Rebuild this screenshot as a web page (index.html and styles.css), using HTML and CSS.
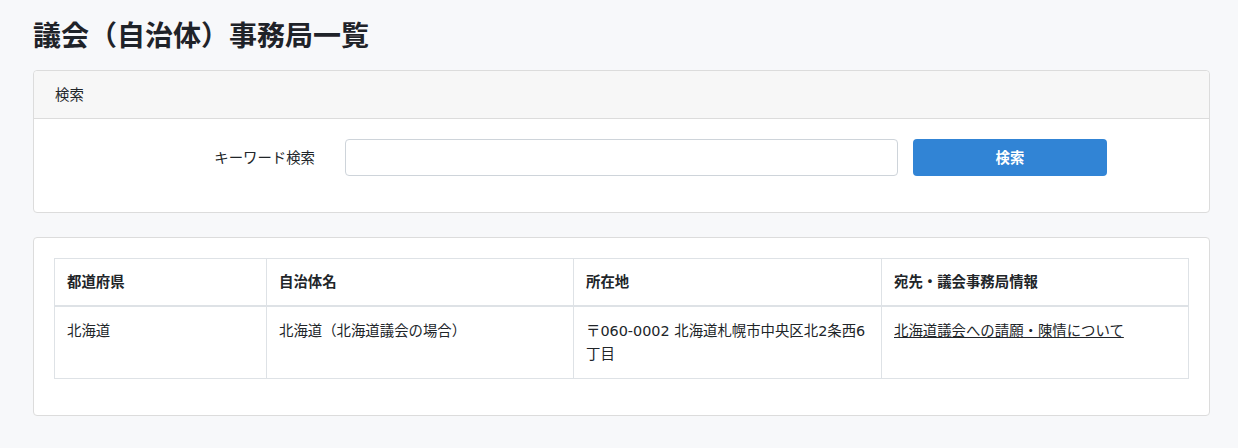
FILE: index.html
```html
<!DOCTYPE html>
<html lang="ja">
<head>
  <meta charset="UTF-8" />
  <meta name="viewport" content="width=device-width, initial-scale=1.0" />
  <title>議会（自治体）事務局一覧</title>
  <link rel="stylesheet" href="styles.css">
</head>
<body>
  <main class="page">
    <h1 class="page-title">議会（自治体）事務局一覧</h1>

    <section class="card">
      <div class="card-header">検索</div>
      <div class="card-body">
        <form class="search-row">
          <label class="search-label" for="keyword">キーワード検索</label>
          <input class="search-input" id="keyword" type="text">
          <button class="search-button" type="button">検索</button>
        </form>
      </div>
    </section>

    <section class="card">
      <div class="card-body">
        <table class="office-table">
          <thead>
            <tr>
              <th class="col-pref">都道府県</th>
              <th class="col-name">自治体名</th>
              <th class="col-addr">所在地</th>
              <th class="col-info">宛先・議会事務局情報</th>
            </tr>
          </thead>
          <tbody>
            <tr>
              <td>北海道</td>
              <td>北海道（北海道議会の場合）</td>
              <td>〒060-0002 北海道札幌市中央区北2条西6丁目</td>
              <td><a href="#">北海道議会への請願・陳情について</a></td>
            </tr>
          </tbody>
        </table>
      </div>
    </section>
  </main>
</body>
</html>
```

FILE: styles.css
```css
body {
  margin: 0;
  font-family: "DejaVu Sans", "Noto Sans CJK JP", sans-serif;
  font-size: 14.4px;
  line-height: 22px;
  background-color: #f7f8fa;
  color: #212529;
}
.page {
  padding: 0 28px 0 33px;
}
.page-title {
  margin: 14px 0 16px;
  font-family: "Noto Sans CJK JP", sans-serif;
  font-size: 28px;
  line-height: 40px;
  font-weight: 700;
  color: #1f2329;
}
.card {
  background-color: #fff;
  border: 1px solid #dcdcdc;
  border-radius: 4px;
  margin-bottom: 24px;
}
.card-header {
  padding: 13px 21px 12px;
  background-color: #f7f7f7;
  border-bottom: 1px solid #dcdcdc;
  border-radius: 4px 4px 0 0;
}
.card-body {
  padding: 20px;
}
.search-row {
  display: flex;
  align-items: center;
  margin: 0 0 16px;
}
.search-label {
  width: 261px;
  margin-right: 30px;
  text-align: right;
}
.search-input {
  width: 553px;
  height: 37px;
  box-sizing: border-box;
  border: 1px solid #ced4da;
  border-radius: 4px;
  font: inherit;
  padding: 6px 12px;
}
.search-button {
  width: 194px;
  height: 37px;
  margin-left: 15px;
  border: none;
  border-radius: 4px;
  background-color: #3184d5;
  color: #fff;
  font: inherit;
  font-weight: 700;
}
.office-table {
  width: 100%;
  border-collapse: collapse;
  margin-bottom: 16px;
}
.office-table th,
.office-table td {
  border: 1px solid #dee2e6;
  padding: 12px;
  text-align: left;
  vertical-align: top;
}
.office-table th {
  font-weight: 700;
  border-bottom: 2px solid #dee2e6;
}
.office-table td {
  padding-top: 13px;
  line-height: 1.6;
}
.col-pref { width: 187px; }
.col-name { width: 282px; }
.col-addr { width: 283px; }
.office-table a {
  color: #212529;
  text-decoration: underline;
}
```
